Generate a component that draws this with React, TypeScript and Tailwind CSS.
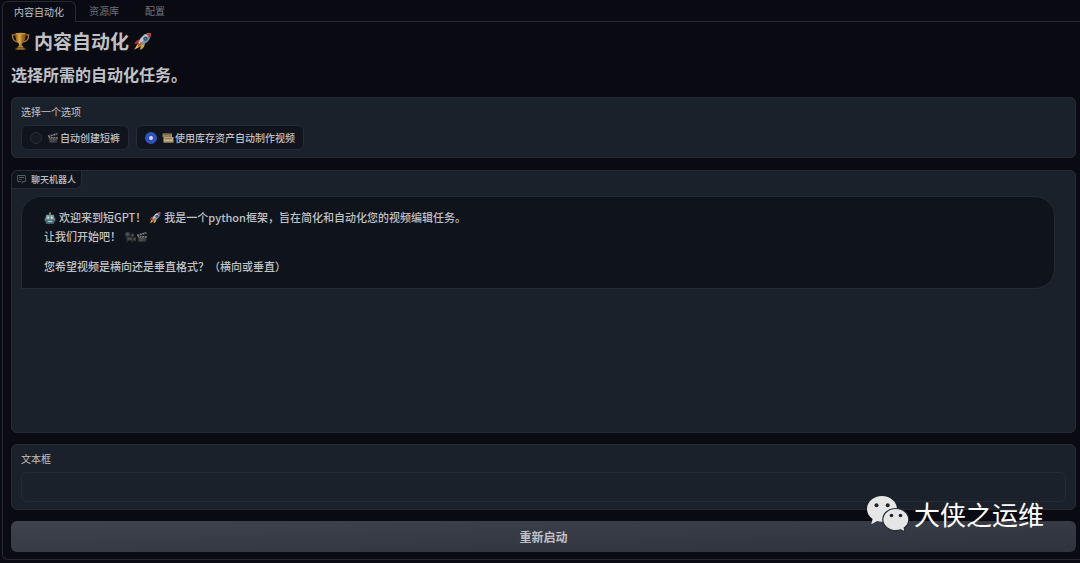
import { useState } from 'react';
import clsx from 'clsx';

const tabs = ['内容自动化', '资源库', '配置'];

const options = [
  { id: 'short', label: '自动创建短裤', icon: ClapperIcon },
  { id: 'stock', label: '使用库存资产自动制作视频', icon: FramesIcon },
];

type IconProps = { className?: string };

function TrophyIcon({ className }: IconProps) {
  return (
    <svg viewBox="0 0 20 20" className={className} aria-hidden="true">
      <defs>
        <linearGradient id="gold" x1="0" x2="1" y1="0" y2="0">
          <stop offset="0" stopColor="#8a5714" />
          <stop offset="0.4" stopColor="#dcae4e" />
          <stop offset="0.65" stopColor="#a8721f" />
          <stop offset="1" stopColor="#7a4b10" />
        </linearGradient>
      </defs>
      <path
        d="M5.5 3H1.4c0 4.600 2 7.200 5.600 7.500M14.500 3h4.100c0 4.600-2 7.200-5.600 7.500"
        fill="none"
        stroke="#b07b27"
        strokeWidth="1.300"
      />
      <path d="M4.500 1.300h11c.2 6.500-1.500 9.700-4.100 11v2.700H8.600v-2.700c-2.600-1.300-4.300-4.500-4.100-11z" fill="url(#gold)" />
      <ellipse cx="10" cy="1.700" rx="5.500" ry="0.900" fill="#c99a40" />
      <path d="M7.600 14.500h4.800l1 2.200H6.600z" fill="#b47d28" />
      <path d="M5 16.500h10l.5 2.500h-11z" fill="#6e431a" />
      <path d="M6.500 17.300h7v.8h-7z" fill="#c0913d" />
    </svg>
  );
}

function RocketIcon({ className }: IconProps) {
  return (
    <svg viewBox="0 0 20 20" className={className} aria-hidden="true">
      <path d="M5.500 11.500 1 19l7.500-4.500z" fill="#d9912c" />
      <path d="M4.500 13.500 2.300 17.800l4.200-2.200z" fill="#ead35c" />
      <path d="M8.500 7.500C5 7.500 2.500 9.300 1.300 12.700l5.200-.7z" fill="#b3342d" />
      <path d="M12.500 11.500c0 3.500-1.600 6-5 7.400l.7-5.200z" fill="#d0a53a" />
      <path d="M19 1c-5 .1-8.700 2.300-11.200 6.200L5.700 11.500l2.800 2.800 4.300-2.100C16.700 9.700 18.900 6 19 1z" fill="#7d8fa3" />
      <path d="M19 1c-5 .1-8.700 2.300-11.200 6.200L5.700 11.500l1.300 1.300z" fill="#bcc6cf" />
      <path d="M19 1c-2 0-3.800.4-5.400 1.100l4.300 4.300C18.600 4.800 19 3 19 1z" fill="#b3413b" />
      <circle cx="13" cy="7" r="2.200" fill="#26445f" />
      <circle cx="13" cy="7" r="1.100" fill="#4d86ac" />
      <path d="m8.300 10.700 1 1-4 4-.8-.8z" fill="#c43e33" />
    </svg>
  );
}

function ClapperIcon({ className }: IconProps) {
  return (
    <svg viewBox="0 0 20 20" className={className} aria-hidden="true">
      <path d="M3 8.500h15l-1 9.500H4z" fill="#3b3b3d" />
      <path d="m1.200 5.800 15.800-4 .7 2.900L2 8.700z" fill="#77777a" />
      <path d="m4.500 5 2 2.600M9 3.900l2 2.500M13.500 2.800l2 2.400" stroke="#1c1c1f" strokeWidth="1.600" />
      <path d="M3 8.500h15v2.300H3z" fill="#8b8b8c" />
      <path d="m6 8.500-1.500 2.300M10.500 8.500 9 10.800M15 8.500l-1.500 2.300" stroke="#1c1c1f" strokeWidth="1.600" />
      <path d="M5.500 13h9M5.500 15.500h6" stroke="#68686b" />
    </svg>
  );
}

function FramesIcon({ className }: IconProps) {
  return (
    <svg viewBox="0 0 20 20" className={className} aria-hidden="true">
      <path d="M1 2.500h15.500v6H1z" fill="#b49a72" />
      <path d="M2 4.300h13M2 6.800h13" stroke="#443a2c" strokeWidth="0.900" />
      <path d="M2.500 8.500h16.500v9h-16.500z" fill="#c8af85" />
      <path d="M4 10.500h13v1.600H4z" fill="#7d6646" />
      <path d="M2.500 15.800H19v1.700H2.500z" fill="#8a7556" />
    </svg>
  );
}

function RobotIcon({ className }: IconProps) {
  return (
    <svg viewBox="0 0 20 20" className={className} aria-hidden="true">
      <path d="M10 1v4" stroke="#8b9da1" strokeWidth="1.500" />
      <circle cx="10" cy="2.300" r="1.700" fill="#b38747" />
      <path d="M1 9.500h2.500v6H1zM16.500 9.500H19v6h-2.500z" fill="#8a5a53" />
      <path d="M5 4.500h10a2 2 0 0 1 2 2V17a2 2 0 0 1-2 2H5a2 2 0 0 1-2-2V6.500a2 2 0 0 1 2-2z" fill="#6e9ca3" />
      <path d="M3 13h14v4a2 2 0 0 1-2 2H5a2 2 0 0 1-2-2z" fill="#3e6c77" />
      <circle cx="7" cy="9.500" r="1.800" fill="#d5e0df" />
      <circle cx="13" cy="9.500" r="1.800" fill="#d5e0df" />
      <path d="m10 10.500 1.200 2.200H8.800z" fill="#b3594b" />
      <path d="M6 14.800h8v2H6z" fill="#b5c8ca" />
    </svg>
  );
}

function CameraIcon({ className }: IconProps) {
  return (
    <svg viewBox="0 0 20 20" className={className} aria-hidden="true">
      <circle cx="6" cy="5.500" r="4.200" fill="#3b3d42" />
      <circle cx="14" cy="7" r="3.300" fill="#34363b" />
      <path d="M4 9.500h12v7H4z" fill="#2d2f34" />
      <path d="m15.500 12 4-2v7l-4-2z" fill="#484a4f" />
      <circle cx="6" cy="5.500" r="1.500" fill="#64666a" />
      <circle cx="14" cy="7" r="1.200" fill="#5a5c60" />
      <path d="M6 12h6v2H6zM6 16.500 4 19M13 16.500l2 2.500" stroke="#4e5055" fill="#55575b" />
    </svg>
  );
}

function ChatIcon({ className }: IconProps) {
  return (
    <svg viewBox="2 3 28 28" className={className} aria-hidden="true" fill="currentColor">
      <path d="M17.740 30 16 29l4-7h6a2 2 0 0 0 2-2V8a2 2 0 0 0-2-2H6a2 2 0 0 0-2 2v12a2 2 0 0 0 2 2h9v2H6a4 4 0 0 1-4-4V8a4 4 0 0 1 4-4h20a4 4 0 0 1 4 4v12a4 4 0 0 1-4 4h-4.840Z" />
      <path d="M8 10h16v2H8zM8 16h10v2H8z" />
    </svg>
  );
}

function WeChatLogo({ className }: IconProps) {
  return (
    <svg viewBox="0 0 42 36" className={className} aria-hidden="true">
      <path
        d="M15 0C6.700 0 0 5.700 0 13c0 4.100 2.200 7.600 5.600 10l-1.300 5.300 5.900-3.200c1.500.4 3.100.6 4.800.6 8.300 0 15-5.700 15-12.700S23.300 0 15 0z"
        fill="#e6e6e6"
      />
      <path
        d="M28.800 12.500c7.200 0 13 4.900 13 11.100 0 3.500-1.800 6.400-4.600 8.400l1 4-4.500-2.200c-1.500.5-3.200.8-4.900.8-7.200 0-13-4.900-13-11s5.800-11.100 13-11.100z"
        fill="#e6e6e6"
        stroke="#252b34"
        strokeWidth="1.200"
      />
      <circle cx="9.500" cy="9.300" r="2" fill="#20252d" />
      <circle cx="20.700" cy="9.300" r="2" fill="#20252d" />
      <circle cx="24.500" cy="19.500" r="1.800" fill="#20252d" />
      <circle cx="33.500" cy="19.500" r="1.800" fill="#20252d" />
    </svg>
  );
}

export default function App() {
  const [activeTab, setActiveTab] = useState(tabs[0]);
  const [selected, setSelected] = useState('stock');
  const [text, setText] = useState('');

  return (
    <div className="relative min-h-screen bg-[#0a0a12] pt-px pb-[3px] pl-[2px] font-['Noto_Sans_CJK_SC',sans-serif] text-[10px] text-[#c0c1c5]">
      {/* Tabs */}
      <nav className="flex h-[21px]" role="tablist">
        {tabs.map((tab) => (
          <button
            key={tab}
            type="button"
            role="tab"
            aria-selected={tab === activeTab}
            onClick={() => setActiveTab(tab)}
            className={clsx(
              'leading-5',
              tab === activeTab
                ? 'rounded-t-md border border-b-0 border-[#262833] px-[11px] text-[#c0c1c5]'
                : 'border-b border-[#262833] px-[13px] text-[#70737e]'
            )}
          >
            {tab}
          </button>
        ))}
        <div className="flex-1 border-b border-[#262833]" />
      </nav>

      <main className="rounded-bl-md border-b border-l border-[#262833] pt-[7px] pr-1 pb-[7px] pl-2">
        <h1 className="flex items-center gap-1 text-[19px] leading-6 font-bold">
          <TrophyIcon className="size-[19px]" />
          内容自动化
          <RocketIcon className="size-[19px]" />
        </h1>
        <h2 className="mt-[11px] text-base leading-5 font-bold">选择所需的自动化任务。</h2>

        {/* Task choice */}
        <fieldset className="mt-[13px] rounded-md border border-[#262c37] bg-[#1b212a] px-[9px] pt-[7px] pb-[7px]">
          <legend className="float-left w-full leading-[14px]">选择一个选项</legend>
          <div className="clear-both flex flex-wrap gap-[7px] pt-[6px]">
            {options.map(({ id, label, icon: Icon }) => (
              <label
                key={id}
                className="flex h-[25px] items-center rounded-md border border-[#262a36] bg-[#0f141d] px-2 font-medium"
              >
                <input
                  type="radio"
                  name="task"
                  value={id}
                  checked={selected === id}
                  onChange={() => setSelected(id)}
                  className="mr-[5px] size-3 appearance-none rounded-full border border-[#2a2e39] bg-[#151a22] checked:border-4 checked:border-[#3152bd] checked:bg-[#d5d9e5]"
                />
                <Icon className="mr-px size-3" />
                {label}
              </label>
            ))}
          </div>
        </fieldset>

        {/* Chat */}
        <section className="mt-3 h-[263px] rounded-md border border-[#262c37] bg-[#1b212a]">
          <h3 className="flex h-[18px] w-fit items-center gap-[5px] rounded-tl-md rounded-br-md border-r border-b border-[#262a36] bg-[#0f141d] px-[5px] text-[9px] font-medium">
            <ChatIcon className="size-[9px] text-[#70737e]" />
            聊天机器人
          </h3>
          <div className="mt-[7px] mr-5 ml-[9px] rounded-[20px] rounded-bl-none border border-[#262a36] bg-[#0f131c] px-[22px] pt-[11px] pb-3 text-[11px] leading-[19px] font-medium">
            <p>
              <RobotIcon className="mr-[3px] inline size-3 align-[-2px]" />
              欢迎来到短GPT！
              <RocketIcon className="mx-[3px] inline size-3 align-[-2px]" />
              我是一个python框架，旨在简化和自动化您的视频编辑任务。
              <br />
              让我们开始吧！
              <CameraIcon className="ml-[3px] inline size-3 align-[-2px]" />
              <ClapperIcon className="inline size-3 align-[-2px]" />
            </p>
            <p className="mt-[11px]">您希望视频是横向还是垂直格式？（横向或垂直）</p>
          </div>
        </section>

        {/* Reply box */}
        <div className="mt-[11px] rounded-md border border-[#262c37] bg-[#1b212a] px-[9px] pt-[7px] pb-[7px]">
          <label htmlFor="reply" className="block leading-[14px]">
            文本框
          </label>
          <input
            id="reply"
            type="text"
            value={text}
            onChange={(e) => setText(e.target.value)}
            className="mt-[6px] block h-[30px] w-full rounded-md border border-[#262a36] px-2 outline-none"
          />
        </div>

        <button
          type="button"
          onClick={() => setText('')}
          className="mt-[11px] block h-[31px] w-full rounded-md bg-linear-to-br from-[#3e434e] to-[#2d323d] text-[12px] font-bold"
        >
          重新启动
        </button>
      </main>

      <div className="pointer-events-none absolute right-9 bottom-[31px] flex items-center gap-[5px] text-[26px] leading-9 text-white">
        <WeChatLogo className="h-9 w-[42px]" />
        大侠之运维
      </div>
    </div>
  );
}
